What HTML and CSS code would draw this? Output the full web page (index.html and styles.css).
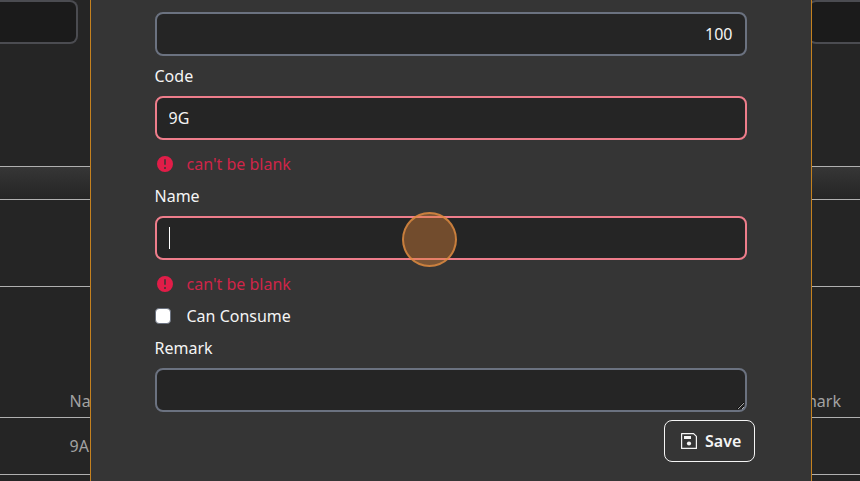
FILE: index.html
```html
<!DOCTYPE html>
<html lang="en">
<head>
<meta charset="utf-8">
<title>Edit</title>
<link rel="stylesheet" href="styles.css">
</head>
<body>
<main class="page">
  <div class="filters"><div class="filter filter-start"></div><div class="filter filter-end"></div></div>
  <div class="band"></div>
  <div class="section"></div>
  <div class="table-head"><span>Name</span><span>Remark</span></div>
  <div class="table-row"><span>9A</span></div>
</main>
<div class="modal">
  <form class="form">
    <input class="field number" type="text" value="100" aria-label="Sequence">
    <label class="label" for="code">Code</label>
    <input class="field invalid" id="code" type="text" value="9G">
    <p class="error"><svg viewBox="0 0 20 20"><path fill-rule="evenodd" d="M18 10a8 8 0 1 1-16 0 8 8 0 0 1 16 0Zm-8-5a.75.75 0 0 1 .75.75v4.5a.75.75 0 0 1-1.5 0v-4.5A.75.75 0 0 1 10 5Zm0 10a1 1 0 1 0 0-2 1 1 0 0 0 0 2Z"/></svg>can't be blank</p>
    <label class="label">Name</label>
    <div class="field invalid name"><span class="caret"></span><span class="pointer"></span></div>
    <p class="error"><svg viewBox="0 0 20 20"><path fill-rule="evenodd" d="M18 10a8 8 0 1 1-16 0 8 8 0 0 1 16 0Zm-8-5a.75.75 0 0 1 .75.75v4.5a.75.75 0 0 1-1.5 0v-4.5A.75.75 0 0 1 10 5Zm0 10a1 1 0 1 0 0-2 1 1 0 0 0 0 2Z"/></svg>can't be blank</p>
    <label class="check"><span class="box"></span>Can Consume</label>
    <label class="label" for="remark">Remark</label>
    <textarea class="field" id="remark"></textarea>
    <button class="save" type="button"><svg viewBox="0 0 16 16"><path class="outline" d="M.6.6h12l2.8 2.8v12H.6z"/><path d="M3 3h7v3H3z"/><circle cx="8" cy="10.5" r="2.1"/></svg>Save</button>
  </form>
</div>
</body>
</html>
```
FILE: styles.css
```css
* { box-sizing: border-box; }
body {
  margin: 0;
  height: 481px;
  overflow: hidden;
  position: relative;
  background: #252525;
  color: #f4f4f4;
  font: 16px/24px "Noto Sans", sans-serif;
}
.page { color: #a2a2a2; }
.filters {
  height: 166px;
  display: flex;
  justify-content: space-between;
}
.filter {
  height: 44px;
  border: 2px solid #4b4c51;
  background: #1b1b1b;
}
.filter-start { width: 78px; border-left: 0; border-radius: 0 8px 8px 0; }
.filter-end { width: 52px; border-right: 0; border-radius: 8px 0 0 8px; }
.band {
  height: 34px;
  border-top: 1px solid #b0b0b0;
  border-bottom: 1px solid #b0b0b0;
  background: linear-gradient(#363636, #252525);
}
.section { height: 87px; border-bottom: 1px solid #b0b0b0; }
.table-head {
  height: 131px;
  padding: 0 19px 4px 69.5px;
  border-bottom: 1px solid #b0b0b0;
  display: flex;
  align-items: flex-end;
  justify-content: space-between;
}
.table-row {
  height: 57px;
  padding: 16px 69.5px;
  border-bottom: 1px solid #b0b0b0;
}
.modal {
  position: absolute;
  top: 0;
  bottom: 0;
  left: 90px;
  width: 722px;
  padding: 12px 64px 0;
  background: #353535;
  border: solid #c4811f;
  border-width: 0 1px;
}
.form { display: flex; flex-direction: column; gap: 8px; }
.label { margin-left: -.5px; }
.field {
  flex: none;
  width: 100%;
  height: 44px;
  padding: 8px 12.5px 8px 11.5px;
  border: 2px solid #6b7280;
  border-radius: 8px;
  background: #252525;
  color: inherit;
  font: inherit;
  outline: 0;
}
.number { text-align: right; }
.invalid { border-color: #ee7d8b; }
.name { position: relative; padding: 9px 12px; }
.caret { display: block; width: 1px; height: 22px; background: #fff; }
.pointer {
  position: absolute;
  left: 245px;
  top: -6px;
  width: 55px;
  height: 55px;
  border: 2px solid rgba(222, 139, 65, .8);
  border-radius: 50%;
  background: rgba(222, 131, 57, .42);
}
.error {
  display: flex;
  align-items: center;
  gap: 11.5px;
  margin: 4px 0 0;
  color: #cf2549;
}
.error svg { width: 20px; height: 20px; fill: #e11d48; }
.check { display: flex; align-items: center; gap: 15.5px; }
.box {
  width: 16px;
  height: 16px;
  border: 1px solid #6b7280;
  border-radius: 4px;
  background: #fff;
}
.save {
  align-self: flex-end;
  width: 91px;
  height: 42px;
  margin-right: -8px;
  padding: 0 0 0 16px;
  display: flex;
  align-items: center;
  gap: 8px;
  border: 1px solid #f4f4f4;
  border-radius: 8px;
  background: none;
  color: inherit;
  font: inherit;
  font-weight: 600;
}
.save svg { width: 16px; height: 16px; fill: currentColor; }
.save .outline { fill: none; stroke: currentColor; stroke-width: 1.2; stroke-linejoin: round; }
```
